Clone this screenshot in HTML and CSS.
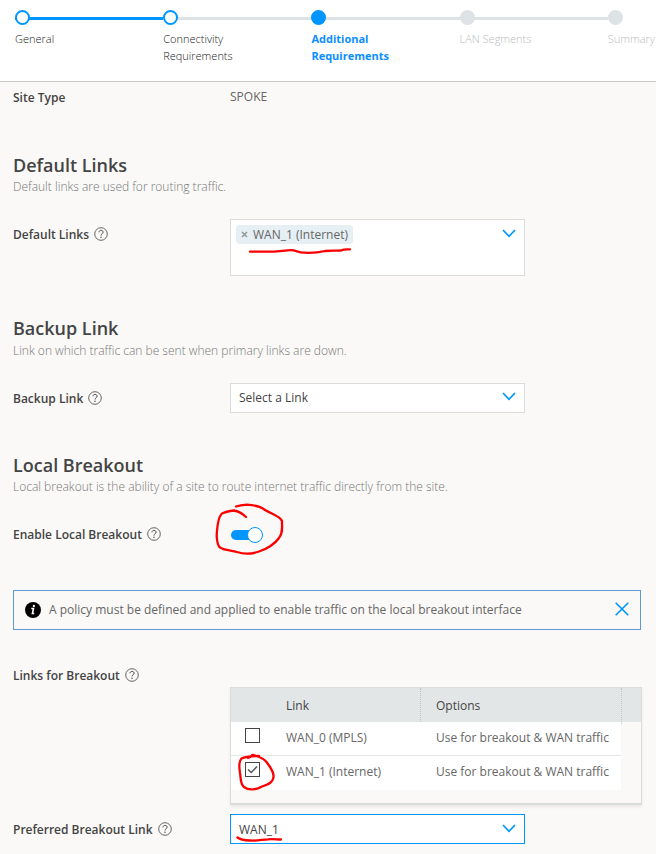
FILE: index.html
```html
<!DOCTYPE html>
<html lang="en">
<head>
<meta charset="utf-8">
<title>Additional Requirements</title>
<link rel="stylesheet" href="styles.css">
</head>
<body>
<svg class="defs" width="0" height="0">
  <symbol id="help" viewBox="0 0 14 14"><circle cx="7" cy="7" r="6.3" fill="none" stroke="#555" stroke-width=".9"/><path d="M5 5.3C5 2.7 9.1 2.8 9.1 5.2C9.1 6.7 7 6.7 7 8.5" fill="none" stroke="#444" stroke-width="1"/><circle cx="7" cy="10.3" r=".7" fill="#444"/></symbol>
  <symbol id="chevron" viewBox="0 0 14 9"><path d="M1 1L7 7.3L13 1" fill="none" stroke="#0096ff" stroke-width="1.7"/></symbol>
</svg>
<header class="stepper">
  <div class="step done"><i class="dot"></i><span>General</span></div>
  <div class="step"><i class="dot"></i><span>Connectivity<br>Requirements</span></div>
  <div class="step active"><i class="dot"></i><span>Additional<br>Requirements</span></div>
  <div class="step next"><i class="dot"></i><span>LAN Segments</span></div>
  <div class="step next last"><i class="dot"></i><span>Summary</span></div>
</header>
<main>
  <div class="row site"><div class="label"><b>Site Type</b></div><div class="value">SPOKE</div></div>

  <section class="default">
    <h2>Default Links</h2>
    <p>Default links are used for routing traffic.</p>
    <div class="row">
      <div class="label"><b>Default Links</b><svg class="help"><use href="#help"/></svg></div>
      <div class="select multi">
        <span class="tag"><svg class="remove" viewBox="0 0 7 7"><path d="M1 1L6 6M6 1L1 6" stroke="#919a9c" stroke-width="1.6"/></svg><span>WAN_1 (Internet)</span></span>
        <svg class="chevron"><use href="#chevron"/></svg>
        <svg class="mark mark-tag" viewBox="248 246 104 10"><path d="M250 251.700H268C278 251.700 285 250.200 291 250.200C296 250.200 298 252.500 304 252.700C314 253.200 318 252.700 325 251C333 250.200 337 251 341 250.500C344 249 347 249.500 350 249.300"/></svg>
      </div>
    </div>
  </section>

  <section class="backup">
    <h2>Backup Link</h2>
    <p>Link on which traffic can be sent when primary links are down.</p>
    <div class="row">
      <div class="label"><b>Backup Link</b><svg class="help"><use href="#help"/></svg></div>
      <div class="select"><span class="choice">Select a Link</span><svg class="chevron"><use href="#chevron"/></svg></div>
    </div>
  </section>

  <section class="breakout">
    <h2>Local Breakout</h2>
    <p>Local breakout is the ability of a site to route internet traffic directly from the site.</p>
    <div class="row">
      <div class="label"><b>Enable Local Breakout</b><svg class="help"><use href="#help"/></svg></div>
      <div class="toggle"><i class="knob"></i>
        <svg class="mark mark-toggle" viewBox="214 502 72 54"><path d="M246 517C243 514 238 511 234 510.500C230 511 225 512 222 513.500C218 517 217 529 216.700 536C217 542 218 546 220 547.500C226 551 232 550 237 552C244 554.500 252 554 259 551.500C266 549.500 275 544 279 538C283 533 282 528 282 521C280 516 272 514 265 510C260 506 253 505 247 504.700C242 505 239 505.500 236 506.500"/></svg>
      </div>
    </div>
  </section>

  <div class="alert">
    <svg class="info" viewBox="0 0 16 16"><circle cx="8" cy="8" r="8" fill="#000"/><path d="M6.300 6.500H8.500L7.400 11.500H9.200" fill="none" stroke="#fff" stroke-width="1.600"/><circle cx="8.900" cy="4" r="1.150" fill="#fff"/></svg>
    <span>A policy must be defined and applied to enable traffic on the local breakout interface</span>
    <svg class="close" viewBox="0 0 14 14"><path d="M.7 .7L13.300 13.300M13.300 .7L.7 13.300" stroke="#0096ff" stroke-width="1.600"/></svg>
  </div>

  <div class="row links">
    <div class="label"><b>Links for Breakout</b><svg class="help"><use href="#help"/></svg></div>
    <div class="table">
      <div class="tr head"><span></span><span>Link</span><span class="opt">Options</span><span class="end"></span></div>
      <div class="tr"><span class="cell"><i class="box"></i></span><span class="cell">WAN_0 (MPLS)</span><span class="cell opt">Use for breakout &amp; WAN traffic</span></div>
      <div class="tr"><span class="cell"><i class="box"><svg viewBox="0 0 13 13"><path d="M2 6.500L5.200 9.500L11 3.500" fill="none" stroke="#555" stroke-width="1.500"/></svg><svg class="mark mark-check" viewBox="236 750 40 42"><path d="M248 758C254 756 250 753.500 255 755.500C260 757 264 759 266.500 762C270 767 274 771 273.500 777C273 783 267 785 262 786.500C257 789.500 249 791 244 787C240 784 241 778 240 773C239 767 239 761 241.500 758.500C246 756 253 756 259 756"/></svg></i></span><span class="cell">WAN_1 (Internet)</span><span class="cell opt">Use for breakout &amp; WAN traffic</span></div>
    </div>
  </div>

  <div class="row preferred">
    <div class="label"><b>Preferred Breakout Link</b><svg class="help"><use href="#help"/></svg></div>
    <div class="select focused"><span class="choice">WAN_1</span><svg class="chevron"><use href="#chevron"/></svg>
      <svg class="mark mark-wan" viewBox="235 835 48 9"><path d="M237.500 837.500C240 839.500 245 840.300 250 840.500C258 841 262 839.500 268 839.300C273 838.800 277 839.500 281 839.500"/></svg>
    </div>
  </div>
</main>
</body>
</html>
```
FILE: styles.css
```css
* { box-sizing: border-box; }
body { margin: 0; width: 656px; height: 854px; overflow: hidden; background: #faf9f7; color: #444; font: 12px/18px "Open Sans", sans-serif; }
i { font-style: normal; }
svg { display: block; flex: none; }
.defs { position: absolute; }

.stepper { display: flex; height: 82px; padding: 10px 0 0 15px; background: #fff; border-bottom: 1px solid #c8c8c5; overflow: hidden; }
.step { flex: 0 0 148.200px; font-size: 11px; line-height: 17px; font-weight: 300; color: #222; background: linear-gradient(#dde2e4, #dde2e4) 0 7px / 100% 3px no-repeat; }
.step.done { background-image: linear-gradient(#0096ff, #0096ff); }
.step.last { background: none; }
.dot { display: block; width: 15px; height: 15px; margin-bottom: 5px; border: 2px solid #0096ff; border-radius: 50%; background: #fff; }
.active .dot { background: #0096ff; }
.next .dot { border-color: #dde2e4; background: #dde2e4; }
.step.active { color: #0b8eff; font-weight: 700; }
.step.next { color: #b9bcbd; }

main { padding-left: 13px; }
.row { display: grid; grid-template-columns: 217px 1fr; align-items: start; }
.label { display: flex; align-items: center; gap: 5px; height: 32px; }
.label b { font-weight: 600; font-size: 12px; }
.label .help { width: 14px; height: 14px; margin-top: -3px; }
.site { height: 71px; }
.value { line-height: 30px; color: #666; }

h2 { margin: 0; font-size: 18px; line-height: 24px; font-weight: 600; }
p { margin: 1px 0 0; line-height: 18px; font-weight: 300; color: #777; }
section.default { height: 163px; }
section.backup { height: 137px; }
section.breakout { height: 137px; }
section .row { margin-top: 23px; }
.backup p { margin-top: 2px; }

.select { position: relative; display: flex; justify-content: space-between; align-items: center; width: 295px; height: 30px; padding: 0 8px; background: #fff; border: 1px solid #dcdcda; }
.select .chevron { width: 14px; height: 9px; margin-top: -3px; }
.focused { border-color: #0096ff; }
.focused .choice { padding-top: 2px; }
.focused .chevron { margin-top: -1px; }
.multi { height: 57px; padding: 5px 8px 0 5px; align-items: flex-start; }
.multi .chevron { margin-top: 4px; }
.tag { display: flex; align-items: center; gap: 5px; height: 19px; padding: 0 5px; border-radius: 4px; background: #e6eff4; color: #666; }
.remove { width: 7px; height: 7px; }

.toggle { position: relative; width: 33px; height: 10px; margin-top: 11px; margin-left: 1px; border-radius: 5px; background: linear-gradient(90deg, #0096ff 26px, transparent 26px); }
.knob { position: absolute; right: 1px; top: -3px; width: 16px; height: 16px; border: 1px solid #0096ff; border-radius: 50%; background: #fff; }

.alert { display: flex; align-items: center; width: 628px; height: 40px; padding: 0 11px; border: 1px solid #5b9bd5; color: #666; }
.info { width: 16px; height: 16px; margin-right: 8px; }
.close { width: 14px; height: 14px; margin-left: auto; margin-top: -2px; }

.links { margin-top: 30px; }
.table { width: 412px; height: 118px; margin-top: 27px; border: 1px solid #dcdedd; border-bottom: 2px solid #d9dada; box-shadow: 0 2px 3px #0001; }
.tr { display: grid; grid-template-columns: 55px 134px 201px 1fr; height: 34px; line-height: 31px; color: #666; }
.tr:nth-child(2) .cell { border-bottom: 1px solid #e4e5e5; }
.tr.head { background: #e2e6e7; color: #444; line-height: 36px; }
.head .opt, .head .end { border-left: 1px dotted #bfc3c4; }
.opt { padding-left: 15px; }
.cell.opt { padding-left: 16px; }
.cell { background: #fff; }
.box { position: relative; display: block; width: 15px; height: 15px; margin: 6px 0 0 14px; border: 1px solid #444; background: #fff; }

.preferred { margin-top: 9px; }

.mark { position: absolute; overflow: visible; fill: none; stroke: #fb0000; stroke-width: 2.3; stroke-linecap: round; stroke-linejoin: round; }
.mark-tag { left: 17px; top: 26px; width: 104px; height: 10px; }
.mark-toggle { left: -17px; top: -28px; width: 72px; height: 54px; }
.mark-check { left: -10px; top: -13px; width: 40px; height: 42px; }
.mark-wan { left: 4px; top: 20px; width: 48px; height: 9px; }
```
